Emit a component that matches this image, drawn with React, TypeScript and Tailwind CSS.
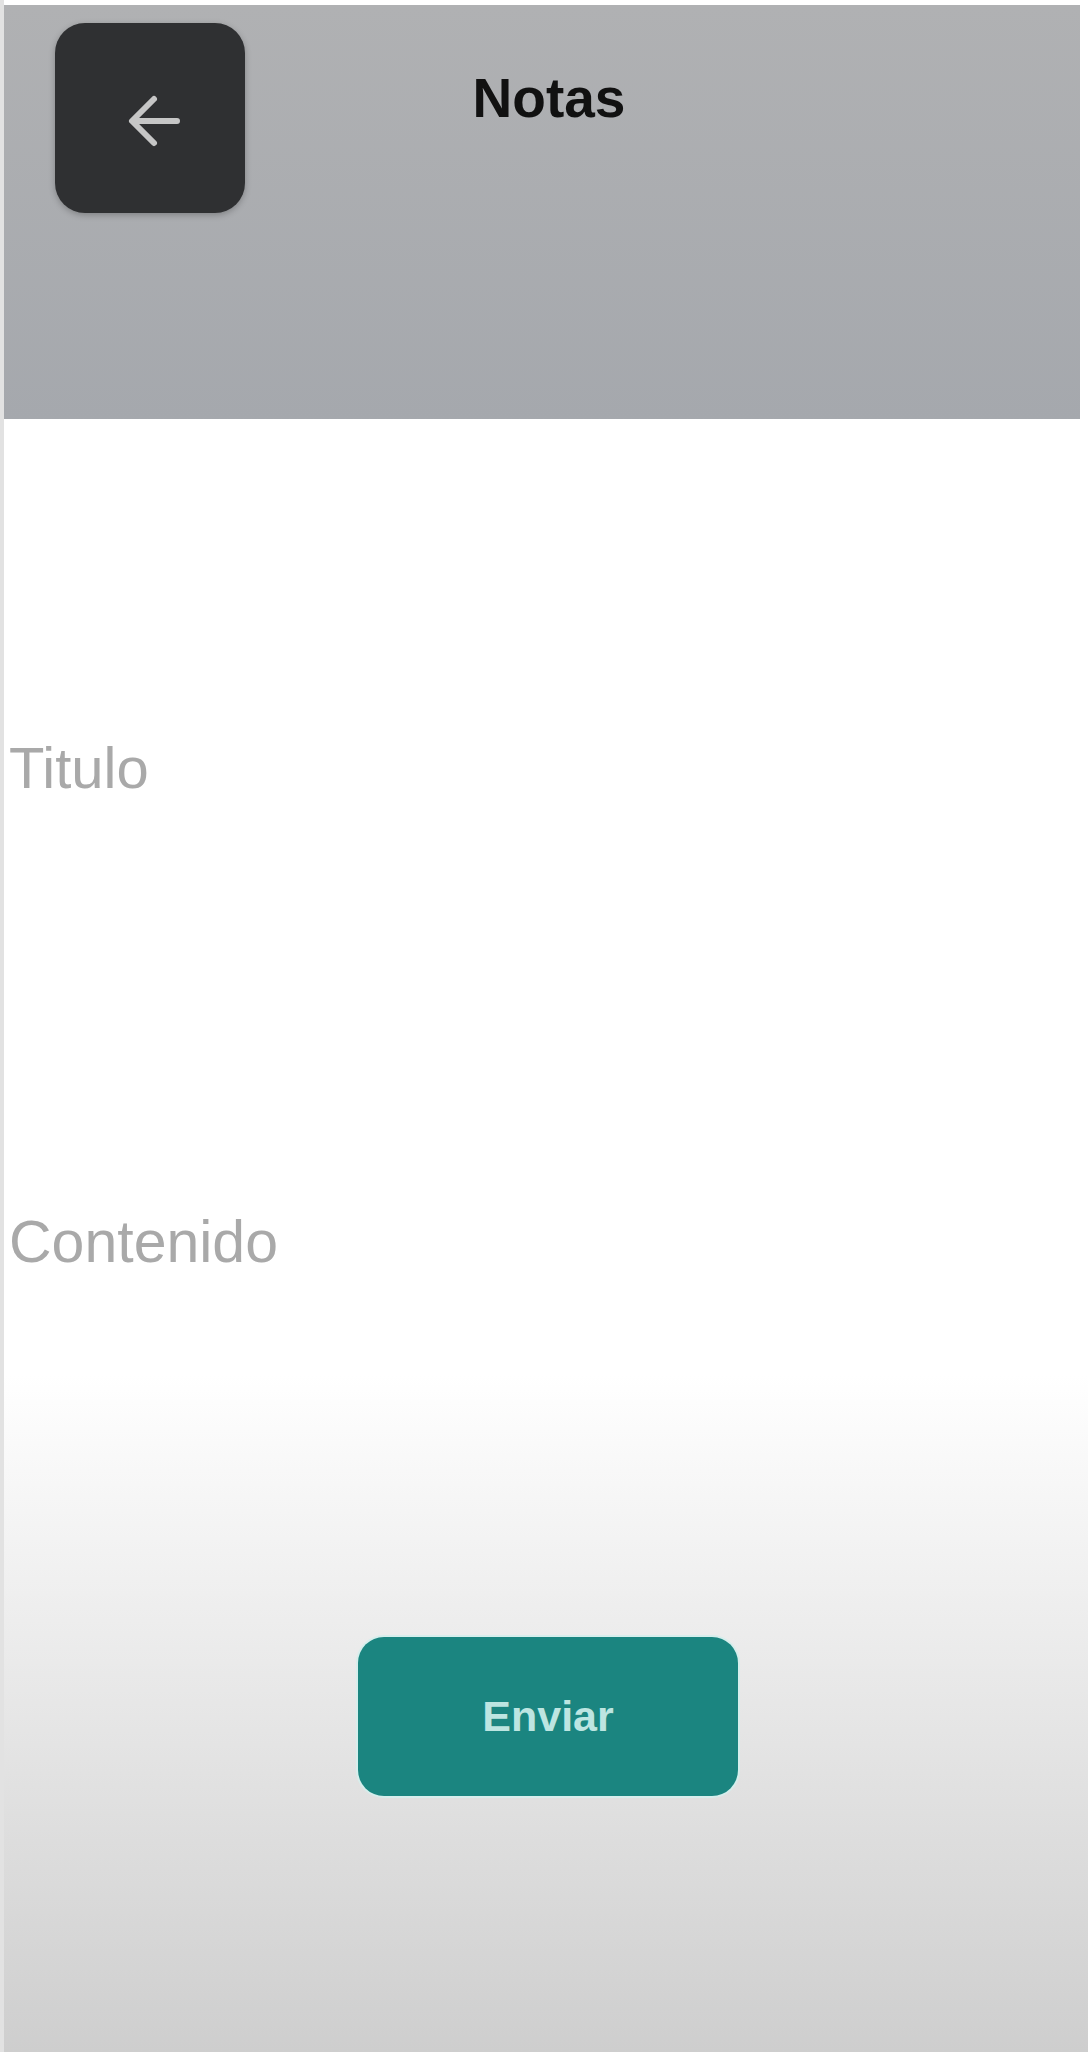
export default function App() {
  return (
    <div
      className="min-h-[2052px] flex flex-col border-l-[4px] border-[#e2e2e2] bg-linear-to-b from-white from-[67%] to-[#cecece]"
      style={{ fontFamily: '"Liberation Sans", Arial, sans-serif' }}
    >
      {/* Header */}
      <header className="mt-[5px] mr-[8px] h-[414px] bg-linear-to-b from-[#b0b1b3] to-[#a5a8ad] grid grid-cols-[1fr_auto_1fr] items-start">
        <button className="ml-[51px] mt-[18px] w-[190px] h-[190px] rounded-[30px] bg-[#2f3032] shadow-[0_2px_6px_rgba(0,0,0,0.25)] flex items-center justify-center">
          <svg width="60" height="60" viewBox="0 0 60 60" className="mt-[6px] ml-[4px]">
            <path
              d="M55 30 H12 M32 8 L10 30 L32 52"
              fill="none"
              stroke="#c6c6c6"
              strokeWidth="6"
              strokeLinecap="round"
              strokeLinejoin="round"
            />
          </svg>
        </button>
        <h1 className="mt-[66px] ml-[14px] text-[55px] leading-none font-bold text-[#111111]">Notas</h1>
        <div />
      </header>

      {/* Form */}
      <div className="flex flex-col px-[5px]">
        <label className="mt-[320px] text-[58px] leading-none text-[#a9a9a9]">Titulo</label>
        <label className="mt-[416px] text-[59px] leading-none text-[#a9a9a9]">Contenido</label>
      </div>

      <div className="flex justify-center pl-[4px] mt-[365px]">
        <button className="w-[380px] h-[159px] rounded-[26px] bg-[#1b8580] ring-2 ring-[#d6eeec] flex items-center justify-center text-[43px] font-semibold text-[#bde5e1]">
          Enviar
        </button>
      </div>
    </div>
  );
}
